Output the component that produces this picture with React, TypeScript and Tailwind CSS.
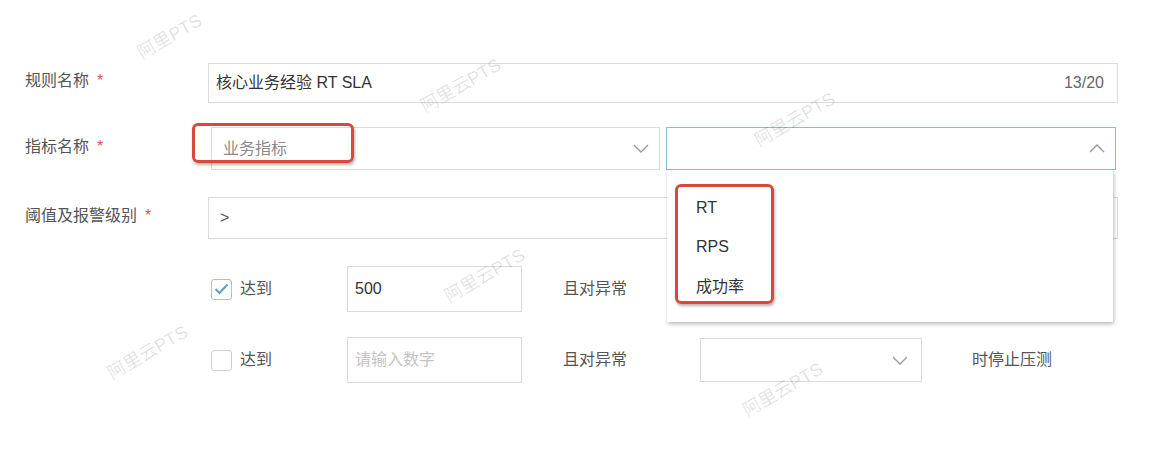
import React from "react";

const Chevron = ({ up = false }: { up?: boolean }) => (
  <svg width="16" height="9" viewBox="0 0 16 9" fill="none" className="shrink-0">
    <polyline
      points={up ? "1,8 8,1 15,8" : "1,1 8,8 15,1"}
      stroke="#9a9a9a"
      strokeWidth="1.3"
      fill="none"
    />
  </svg>
);

const Label = ({ text }: { text: string }) => (
  <div className="w-[183px] shrink-0 text-[16px] text-[#555] flex items-center mb-[4px]">
    <span>{text}</span>
    <span className="ml-[8px] text-[#d9534f]">*</span>
  </div>
);

const Watermark = ({ x, y, text = "阿里云PTS" }: { x: number; y: number; text?: string }) => (
  <div
    className="absolute text-[18px] text-[#000]/[0.12] whitespace-nowrap rotate-[-30deg] -translate-x-1/2 -translate-y-1/2 pointer-events-none"
    style={{ left: x, top: y }}
  >
    {text}
  </div>
);

const Checkbox = ({ checked }: { checked: boolean }) => (
  <div
    className={
      checked
        ? "w-[21px] h-[21px] rounded-[3px] border border-[#9cc4dc] bg-white flex items-center justify-center"
        : "w-[21px] h-[21px] rounded-[3px] border border-[#cfcfcf] bg-white"
    }
  >
    {checked && (
      <svg width="15" height="12" viewBox="0 0 15 12" fill="none">
        <polyline points="1.5,6 5.5,10 13.5,1.5" stroke="#5d9fca" strokeWidth="2" fill="none" />
      </svg>
    )}
  </div>
);

const ThresholdRow = ({ checked, value }: { checked: boolean; value?: string }) => (
  <div className="flex items-center h-[46px]">
    <div className="w-[186px] shrink-0" />
    <div className="w-[136px] shrink-0 flex items-center">
      <Checkbox checked={checked} />
      <span className="ml-[8px] text-[16px] text-[#555]">达到</span>
    </div>
    <div className="w-[175px] h-[46px] border border-[#dadada] flex items-center pl-[7px] text-[16px]">
      {value ? (
        <span className="text-[#333]">{value}</span>
      ) : (
        <span className="text-[#c4c4c4]">请输入数字</span>
      )}
    </div>
    <span className="ml-[41px] text-[16px] text-[#555] w-[137px] shrink-0">且对异常</span>
    <div className="w-[222px] h-[44px] border border-[#dadada] flex items-center justify-end pr-[13px]">
      <Chevron />
    </div>
    <span className="ml-[50px] text-[16px] text-[#555]">时停止压测</span>
  </div>
);

export default function App() {
  return (
    <div
      className="relative w-[1152px] h-[450px] bg-white overflow-hidden"
      style={{ fontFamily: '"Liberation Sans", "Noto Sans CJK SC", sans-serif' }}
    >
      <div className="pt-[63px] pl-[25px]">
        {/* Row 1 */}
        <div className="flex items-center h-[40px]">
          <Label text="规则名称" />
          <div className="w-[910px] h-[40px] border border-[#dcdcdc] flex items-center justify-between pl-[7px] pr-[13px] text-[16px]">
            <span className="text-[#333]">核心业务经验 RT SLA</span>
            <span className="text-[#666]">13/20</span>
          </div>
        </div>

        {/* Row 2 */}
        <div className="flex items-center h-[43px] mt-[24px]">
          <Label text="指标名称" />
          <div className="ml-[3px] w-[449px] h-[43px] border border-[#dcdcdc] flex items-center justify-between pl-[11px] pr-[10px] text-[16px]">
            <span className="text-[#8a8a8a]">业务指标</span>
            <Chevron />
          </div>
          <div className="relative ml-[6px] w-[450px] h-[43px]">
            <div className="w-full h-full border border-[#8fbad4] flex items-center justify-end pr-[10px]">
              <Chevron up />
            </div>
            <div className="absolute z-10 left-[1px] top-full w-[446px] h-[152px] bg-white shadow-[1px_2px_4px_rgba(0,0,0,0.28)] pl-[29px] pt-[27px] text-[16px] text-[#333]">
              <div className="h-[22px] flex items-center">RT</div>
              <div className="h-[22px] flex items-center mt-[17px]">RPS</div>
              <div className="h-[22px] flex items-center mt-[18px]">成功率</div>
            </div>
          </div>
        </div>

        {/* Row 3 */}
        <div className="flex items-center h-[42px] mt-[27px]">
          <Label text="阈值及报警级别" />
          <div className="w-[910px] h-[42px] border border-[#dcdcdc] flex items-center pl-[11px] text-[16px] text-[#555]">
            &gt;
          </div>
        </div>

        {/* Row 4 */}
        <div className="mt-[27px]">
          <ThresholdRow checked value="500" />
        </div>
        {/* Row 5 */}
        <div className="mt-[25px]">
          <ThresholdRow checked={false} />
        </div>
      </div>

      {/* Annotation highlights */}
      <div className="absolute left-[192px] top-[123px] w-[162px] h-[40px] rounded-[6px] border-[3px] border-[#d9483b] shadow-[1px_2px_3px_rgba(0,0,0,0.3)] z-20" />
      <div className="absolute left-[675px] top-[184px] w-[99px] h-[120px] rounded-[6px] border-[3px] border-[#d9483b] shadow-[1px_2px_3px_rgba(0,0,0,0.3)] z-20" />

      {/* Watermarks */}
      <div className="absolute inset-0 z-30 pointer-events-none">
        <Watermark x={170} y={37} text="阿里PTS" />
        <Watermark x={461} y={86} />
        <Watermark x={795} y={120} />
        <Watermark x={485} y={276} />
        <Watermark x={148} y={353} />
        <Watermark x={783} y={390} />
      </div>
    </div>
  );
}
